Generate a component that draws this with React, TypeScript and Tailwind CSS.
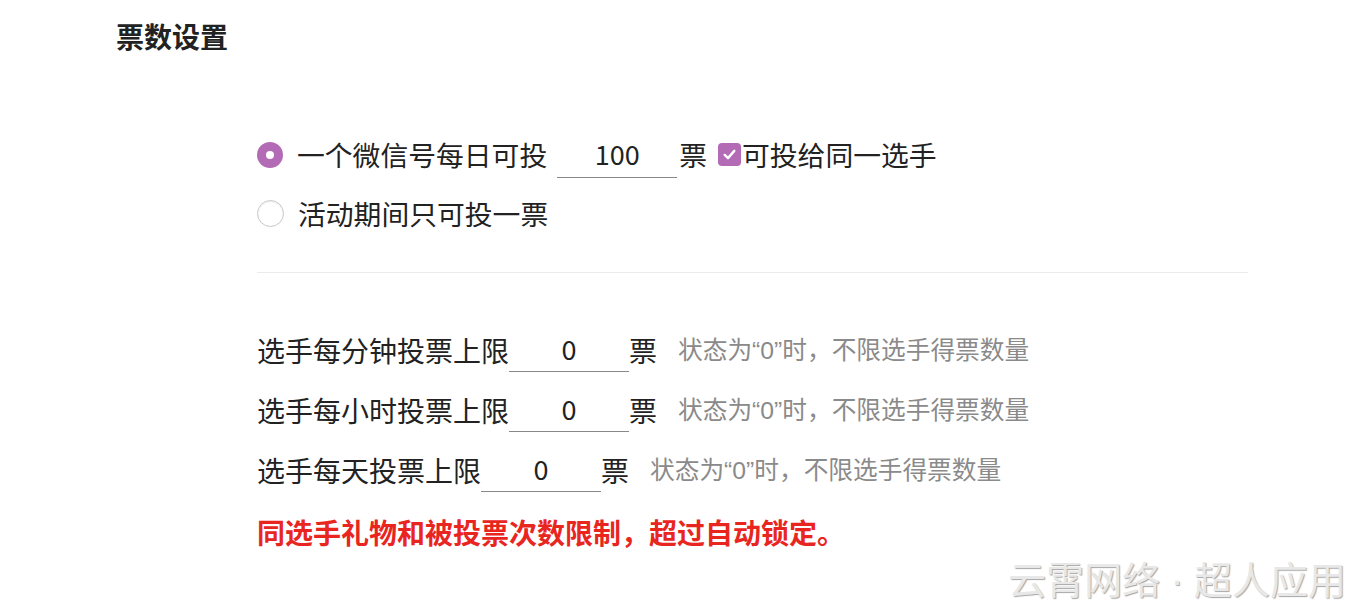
import React from 'react'

const font = { fontFamily: '"Noto Sans CJK SC", "Noto Sans", sans-serif' }

function Hint() {
  return (
    <span className="ml-[21px] text-[24.7px] text-[#8a8a8a] leading-none">
      状态为<span className="font-['Liberation_Sans',sans-serif]">“0”</span>时，不限选手得票数量
    </span>
  )
}

function LimitRow({ label }: { label: string }) {
  return (
    <div className="flex items-center h-[60px]">
      <span className="text-[28px] text-[#222] leading-none">{label}</span>
      <div className="w-[120px] h-[44px] border-b border-[#888] flex items-center justify-center text-[27px] text-[#222]">
        0
      </div>
      <span className="text-[28px] text-[#222] leading-none">票</span>
      <Hint />
    </div>
  )
}

export default function App() {
  return (
    <div className="relative w-[1352px] h-[604px] bg-white overflow-hidden" style={font}>
      <div className="pl-[116px] pt-[20px]">
        {/* Title */}
        <h2 className="text-[28px] font-bold text-[#222] leading-[32px]">票数设置</h2>

        <div className="ml-[141px] mt-[73px] w-[991px]">
          {/* Radio options */}
          <div className="flex items-center h-[59px]">
            <span className="w-[26px] h-[26px] rounded-full bg-[#b36bb6] flex items-center justify-center">
              <span className="w-[8px] h-[8px] rounded-full bg-white" />
            </span>
            <span className="ml-[14px] text-[27.8px] text-[#222] leading-none">一个微信号每日可投</span>
            <div className="ml-[10px] w-[120px] h-[46px] border-b border-[#888] flex items-center justify-center text-[27px] text-[#222]">
              100
            </div>
            <span className="ml-[2px] text-[27.8px] text-[#222] leading-none">票</span>
            <span className="ml-[11px] w-[23px] h-[23px] rounded-[4px] bg-[#b36bb6] flex items-center justify-center">
              <svg width="15" height="15" viewBox="0 0 14 14" fill="none">
                <path d="M2.5 7.4 L5.6 10.4 L11.5 3.6" stroke="white" strokeWidth="2.2" strokeLinecap="round" strokeLinejoin="round" />
              </svg>
            </span>
            <span className="ml-[1px] text-[27.8px] text-[#222] leading-none">可投给同一选手</span>
          </div>
          <div className="flex items-center h-[59px]">
            <span className="w-[27px] h-[27px] rounded-full border border-[#c8c8c8] bg-white shadow-[inset_0_1px_2px_rgba(0,0,0,0.08)]" />
            <span className="ml-[14px] text-[27.8px] text-[#222] leading-none">活动期间只可投一票</span>
          </div>

          {/* Divider */}
          <div className="mt-[29px] border-t border-[#ebebeb]" />

          {/* Limits */}
          <div className="mt-[47px]">
            <LimitRow label="选手每分钟投票上限" />
            <LimitRow label="选手每小时投票上限" />
            <LimitRow label="选手每天投票上限" />
          </div>

          <p className="mt-[15px] text-[28px] font-bold text-[#e8261f] leading-[34px]">
            同选手礼物和被投票次数限制，超过自动锁定。
          </p>
        </div>
      </div>

      {/* Watermark */}
      <div className="absolute right-[6px] bottom-[4px] text-[38px] text-[#e8e8e8] leading-none [text-shadow:1px_1px_1px_rgba(0,0,0,0.35)]">
        云霄网络<span className="font-['Liberation_Sans',sans-serif]"> · </span>超人应用
      </div>
    </div>
  )
}
